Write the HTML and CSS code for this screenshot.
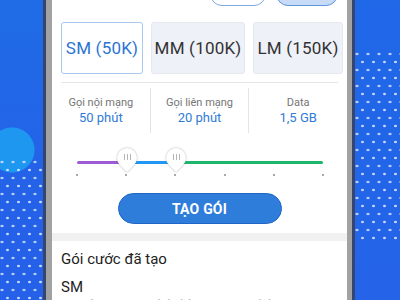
FILE: index.html
```html
<!DOCTYPE html>
<html lang="vi">
<head>
<meta charset="utf-8">
<link rel="stylesheet" href="styles.css">
</head>
<body>
<div class="stage">
  <div class="side side-left">
    <div class="side-blank-left"></div>
    <div class="dots"></div>
  </div>
  <div class="phone">
    <div class="bezel">
      <div class="screen">
        <div class="pills">
          <div class="pill pill-outline"></div>
          <div class="pill pill-filled"></div>
        </div>
        <div class="tabs">
          <div class="tab tab-active tab-sm">SM (50K)</div>
          <div class="tab tab-mm">MM (100K)</div>
          <div class="tab tab-lm">LM (150K)</div>
        </div>
        <div class="divider"></div>
        <div class="stats">
          <div class="stat">
            <div class="stat-label">Gọi nội mạng</div>
            <div class="stat-value">50 phút</div>
          </div>
          <div class="stat">
            <div class="stat-label">Gọi liên mạng</div>
            <div class="stat-value">20 phút</div>
          </div>
          <div class="stat">
            <div class="stat-label">Data</div>
            <div class="stat-value">1,5 GB</div>
          </div>
        </div>
        <div class="slider">
          <div class="track">
            <div class="seg seg-purple"></div>
            <div class="seg seg-blue"></div>
            <div class="seg seg-green"></div>
            <div class="thumb" style="left: 50px"><span class="grip"><i></i><i></i><i></i></span></div>
            <div class="thumb" style="left: 99px"><span class="grip"><i></i><i></i><i></i></span></div>
          </div>
          <div class="ticks">
            <span></span><span></span><span></span><span></span><span></span><span></span>
          </div>
        </div>
        <button class="create">TẠO GÓI</button>
        <div class="band"></div>
        <div class="section-title">Gói cước đã tạo</div>
        <div class="pack-name">SM</div>
        <div class="pack-desc">Gọi nội mạng 50 phút, liên mạng 20 phút</div>
      </div>
    </div>
  </div>
  <div class="side side-right">
    <div class="side-blank-right"></div>
    <div class="dots dots-right"></div>
  </div>
</div>
</body>
</html>
```

FILE: styles.css
```css
* { box-sizing: border-box; }
html, body {
  margin: 0;
  padding: 0;
  width: 400px;
  height: 300px;
  overflow: hidden;
  font-family: Roboto, "Noto Sans", "Liberation Sans", sans-serif;
}
.stage {
  display: flex;
  width: 400px;
  height: 300px;
  background: #2563e8;
}
.side {
  display: flex;
  flex-direction: column;
}
.side-left {
  width: 43px;
  background:
    radial-gradient(circle at 12px 150px, #1e97f1 0, #1e97f1 22px, rgba(30,151,241,0) 23px),
    linear-gradient(180deg, #1f6ce6 0, #2462e8 60%, #2460e8 100%);
}
.side-blank-left { height: 160px; flex-shrink: 0; }
.side-right {
  flex: 1;
  background: linear-gradient(180deg, #1f68e8 0, #2563e8 100%);
}
.side-blank-right { height: 52px; flex-shrink: 0; }
.dots {
  flex: 1;
  background-image:
    radial-gradient(circle, rgba(230,238,255,0.85) 0, rgba(230,238,255,0.85) 1px, rgba(230,238,255,0) 1.6px),
    radial-gradient(circle, rgba(230,238,255,0.85) 0, rgba(230,238,255,0.85) 1px, rgba(230,238,255,0) 1.6px);
  background-size: 11px 16px, 11px 16px;
  background-position: 2px 2px, 7.5px 10px;
}
.dots-right {
  flex: none;
  height: 190px;
}
.phone {
  width: 312px;
  height: 300px;
  flex-shrink: 0;
  border-left: 3px solid #34456f;
  border-right: 3px solid #34456f;
}
.bezel {
  height: 100%;
  border-left: 6px solid #a2a2a2;
  border-right: 5px solid #a2a2a2;
}
.screen {
  height: 100%;
  background: #ffffff;
  display: flex;
  flex-direction: column;
  overflow: hidden;
}
.screen > * { flex-shrink: 0; }
.pills {
  display: flex;
  justify-content: flex-end;
  gap: 10px;
  padding-right: 9px;
  margin-top: -18px;
}
.pill {
  height: 24px;
  border-radius: 12px;
}
.pill-outline {
  width: 56px;
  background: #ffffff;
  border: 1.5px solid #7ea8e6;
}
.pill-filled {
  width: 62px;
  background: #c7dbf6;
  border: 1.5px solid #5f94de;
}
.tabs {
  display: flex;
  gap: 8px;
  margin-top: 16px;
  padding-left: 9px;
}
.tab {
  height: 52px;
  border-radius: 3px;
  display: flex;
  align-items: center;
  justify-content: center;
  font-size: 17px;
  color: #333333;
  background: #eef1f7;
  border: 1px solid #e4e8ef;
  letter-spacing: 0.2px;
}
.tab-sm { width: 82px; }
.tab-mm { width: 94px; }
.tab-lm { width: 90px; }
.tab-active {
  background: #ffffff;
  border: 1px solid #a9c6ef;
  color: #2b74d3;
}
.divider {
  height: 1px;
  background: #e6e6e6;
  margin: 8px 9px 0 9px;
}
.stats {
  display: flex;
  margin-top: 5px;
}
.stat {
  flex: 1;
  height: 45px;
  padding-top: 8px;
  text-align: center;
}
.stat + .stat { border-left: 1px solid #e4e4e4; }
.stat-label {
  font-size: 11px;
  line-height: 14px;
  color: #757575;
}
.stat-value {
  font-size: 13px;
  line-height: 16px;
  color: #2f7bd8;
}
.slider {
  margin: 28px 23px 0 24px;
}
.track {
  position: relative;
  display: flex;
  height: 3px;
  margin: 0 1px;
}
.seg { height: 3px; }
.seg-purple { width: 50px; background: #9d5bd4; border-radius: 2px 0 0 2px; }
.seg-blue { width: 49px; background: #2196f3; }
.seg-green { flex: 1; background: #1eb66c; border-radius: 0 2px 2px 0; }
.thumb {
  position: absolute;
  top: -3px;
  width: 20px;
  height: 20px;
  margin-left: -10px;
  margin-top: -10px;
  display: flex;
  align-items: center;
  justify-content: center;
}
.thumb::before {
  content: "";
  position: absolute;
  inset: 0;
  background: #ffffff;
  border-radius: 50% 50% 0 50%;
  transform: rotate(45deg);
  box-shadow: 0 0 2px rgba(0,0,0,0.35);
}
.grip {
  position: relative;
  display: flex;
  gap: 2px;
  margin-top: -2px;
}
.grip i {
  display: block;
  width: 1px;
  height: 6px;
  background: #b5b5b5;
}
.ticks {
  display: flex;
  justify-content: space-between;
  margin-top: 10px;
}
.ticks span {
  width: 2px;
  height: 2px;
  background: #8a8a8a;
  border-radius: 1px;
}
.create {
  display: block;
  align-self: center;
  width: 164px;
  height: 31px;
  margin-top: 17px;
  border-radius: 16px;
  background: #2f7ddb;
  border: 1.5px solid #1f66c6;
  color: #ffffff;
  font-family: Roboto, "Noto Sans", "Liberation Sans", sans-serif;
  font-size: 14px;
  font-weight: 700;
  letter-spacing: 0.2px;
  padding: 0;
}
.band {
  height: 8px;
  margin-top: 9px;
  background: #f1f1f1;
}
.section-title {
  margin-top: 8px;
  padding-left: 9px;
  font-size: 15px;
  line-height: 20px;
  color: #222222;
}
.pack-name {
  margin-top: 8px;
  padding-left: 9px;
  font-size: 15px;
  line-height: 20px;
  color: #222222;
}
.pack-desc {
  margin-top: 0px;
  padding-left: 9px;
  font-size: 12px;
  line-height: 16px;
  color: #b0b0b0;
}
```
